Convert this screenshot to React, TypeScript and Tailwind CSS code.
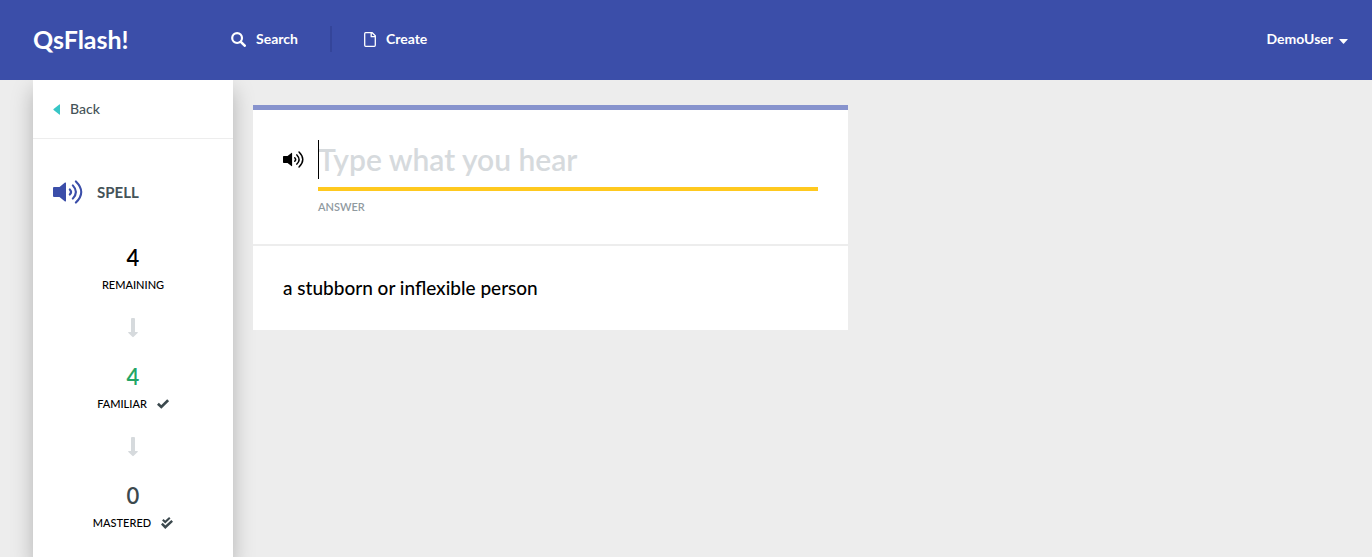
import React from "react";

type IconProps = { className?: string };

function SearchIcon({ className }: IconProps) {
  return (
    <svg viewBox="0 0 15 15" className={className} fill="none" stroke="currentColor" aria-hidden="true">
      <circle cx="6.1" cy="6.1" r="4.9" strokeWidth="2.2" />
      <path d="M9.8 9.8 L13.7 13.7" strokeWidth="2.6" strokeLinecap="round" />
    </svg>
  );
}

function FileIcon({ className }: IconProps) {
  return (
    <svg viewBox="0 0 12 15" className={className} fill="none" stroke="currentColor" strokeWidth="1.3" strokeLinejoin="round" aria-hidden="true">
      <path d="M1.6 0.7 H8.2 L11.3 3.8 V13.3 Q11.3 14.3 10.3 14.3 H1.7 Q0.7 14.3 0.7 13.3 V1.7 Q0.7 0.7 1.6 0.7 Z" />
      <path d="M7.2 0.8 V4.7 H11.2" />
    </svg>
  );
}

function SpeakerIcon({ className }: IconProps) {
  return (
    <svg viewBox="0 0 30 24" className={className} fill="none" stroke="currentColor" strokeLinecap="round" aria-hidden="true">
      <path
        d="M1 7 H6.5 L12 2.6 Q13 2 13 3.2 V20.8 Q13 22 12 21.4 L6.5 17 H1 Q0 17 0 16 V8 Q0 7 1 7 Z"
        fill="currentColor"
        stroke="none"
      />
      <path d="M16.8 9.4 Q19.4 12 16.8 14.6" strokeWidth="2.1" />
      <path d="M19.8 5.4 Q26 12 19.8 18.6" strokeWidth="2.1" />
      <path d="M22.9 1.4 Q33.6 12 22.9 22.6" strokeWidth="2.1" />
    </svg>
  );
}

function ArrowDownIcon({ className }: IconProps) {
  return (
    <svg viewBox="0 0 10 20" className={className} fill="currentColor" aria-hidden="true">
      <path d="M3 1 Q3 0 4 0 H6 Q7 0 7 1 V14 H9.3 Q10.3 14 9.6 14.9 L5.7 18.8 Q5 19.5 4.3 18.8 L0.4 14.9 Q-0.3 14 0.7 14 H3 Z" />
    </svg>
  );
}

function CheckIcon({ className }: IconProps) {
  return (
    <svg viewBox="0 0 12 10" className={className} fill="none" stroke="currentColor" strokeWidth="2.6" aria-hidden="true">
      <path d="M0.9 4.7 L4.3 8 L11.1 1.2" />
    </svg>
  );
}

function DoubleCheckIcon({ className }: IconProps) {
  return (
    <svg viewBox="0 0 12 12" className={className} fill="none" stroke="currentColor" strokeWidth="2.1" aria-hidden="true">
      <path d="M1.8 2.8 L4.2 5 L8.8 0.8" />
      <path d="M0.8 6.6 L4.3 10.2 L11.2 3.8" strokeWidth="2.5" />
    </svg>
  );
}

function Count({
  value,
  label,
  color,
  icon,
}: {
  value: number;
  label: string;
  color: string;
  icon?: React.ReactNode;
}) {
  return (
    <div className="flex flex-col items-center">
      <span className={`text-[22px] leading-7 font-semibold ${color}`}>{value}</span>
      <span className="flex h-[26px] items-center gap-2.5 text-[11px] font-medium text-black">
        {label}
        {icon}
      </span>
    </div>
  );
}

export default function App() {
  return (
    <div className="flex min-h-screen flex-col bg-[#ededed] font-[Lato,sans-serif] text-[#455358]">
      <header className="relative z-10 flex h-20 items-center bg-[#3b4ea9] pr-6 pb-0.5 pl-[33px] text-white">
        <a href="#home" className="w-[198px] text-[25px] leading-8 font-bold">
          QsFlash!
        </a>
        <nav className="flex items-center text-sm font-bold">
          <a href="#search" className="flex items-center gap-2.5">
            <SearchIcon className="h-[15px] w-[15px]" />
            Search
          </a>
          <span className="mx-8 h-[26px] w-0.5 bg-[#34459a]" />
          <a href="#create" className="flex items-center gap-2.5">
            <FileIcon className="h-[15px] w-3" />
            Create
          </a>
        </nav>
        <button type="button" className="ml-auto flex items-center gap-1.5 text-sm font-bold">
          DemoUser
          <svg viewBox="0 0 9 5" className="mt-1 h-[5px] w-[9px]" fill="currentColor" aria-hidden="true">
            <path d="M0.6 0 H8.4 Q9 0 8.6 0.6 L5 4.6 Q4.5 5 4 4.6 L0.4 0.6 Q0 0 0.6 0 Z" />
          </svg>
        </button>
      </header>

      <div className="flex grow pl-[33px]">
        <aside className="w-[200px] shrink-0 bg-white shadow-[0_10px_20px_rgba(0,0,0,0.25)]">
          <div className="flex h-[59px] items-center border-b border-[#ededed] px-5">
            <a href="#back" className="flex items-center gap-2.5 text-sm font-medium text-[#455358]">
              <svg viewBox="0 0 7 11" className="h-[11px] w-[7px] text-[#38c6c6]" fill="currentColor" aria-hidden="true">
                <path d="M7 0.8 V10.2 Q7 11 6.3 10.4 L0.6 6 Q0 5.5 0.6 5 L6.3 0.6 Q7 0 7 0.8 Z" />
              </svg>
              Back
            </a>
          </div>
          <h1 className="mt-[39px] flex h-7 items-center gap-3.5 px-5 text-[15px] font-bold">
            <SpeakerIcon className="h-6 w-[30px] text-[#3b4ea9]" />
            SPELL
          </h1>
          <div className="flex flex-col items-center pt-[38px] text-[#3c494e]">
            <Count value={4} label="REMAINING" color="text-black" />
            <ArrowDownIcon className="mt-5 mb-[25px] h-5 w-2.5 text-[#d6dadd]" />
            <Count
              value={4}
              label="FAMILIAR"
              color="text-[#23a566]"
              icon={<CheckIcon className="h-2.5 w-3 text-[#3c494e]" />}
            />
            <ArrowDownIcon className="mt-5 mb-[25px] h-5 w-2.5 text-[#d6dadd]" />
            <Count
              value={0}
              label="MASTERED"
              color="text-[#3c494e]"
              icon={<DoubleCheckIcon className="h-3 w-3 text-[#3c494e]" />}
            />
          </div>
        </aside>

        <main className="grow px-5 pt-[25px]">
          <section className="w-full max-w-[595px] border-t-[5px] border-[#8793cd] bg-white">
            <div className="flex gap-3.5 border-b-2 border-[#ededed] px-[30px] pt-[30px] pb-[29px]">
              <button type="button" aria-label="Play audio" className="mt-[11px] h-[17px] w-[21px] shrink-0 text-black">
                <SpeakerIcon className="h-[17px] w-[21px]" />
              </button>
              <div className="relative grow">
                <input
                  id="answer"
                  type="text"
                  placeholder="Type what you hear"
                  className="block h-[51px] w-full border-b-4 border-[#ffc91f] pb-2.5 text-[30px] font-semibold text-black caret-transparent outline-none placeholder:text-[#d6dadd]"
                />
                <span className="absolute top-0 left-0 h-[39px] w-px bg-black" />
                <label htmlFor="answer" className="mt-2 block text-[11px] leading-4 font-semibold text-[#909a9f]">
                  ANSWER
                </label>
              </div>
            </div>
            <p className="px-[30px] py-7 text-[19px] leading-7 font-medium text-black">a stubborn or inflexible person</p>
          </section>
        </main>
      </div>
    </div>
  );
}
